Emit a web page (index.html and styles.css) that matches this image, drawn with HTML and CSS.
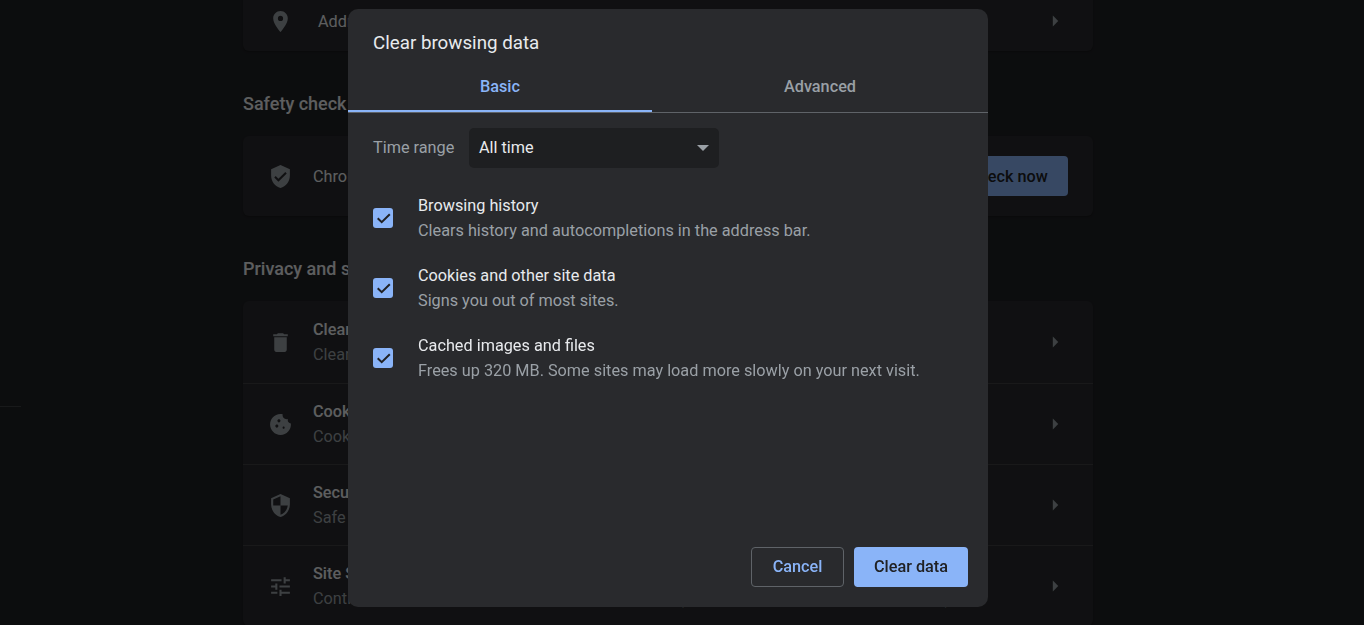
FILE: index.html
```html
<!DOCTYPE html>
<html lang="en">
<head>
  <meta charset="UTF-8" />
  <title>Settings - Privacy and security</title>
  <link rel="stylesheet" href="styles.css">
</head>
<body>
  <div class="page">
    <div class="sidebar"><div class="side-line"></div></div>
    <main class="main">
      <section class="card first-card">
        <div class="row short">
          <svg class="icon" viewBox="0 0 24 24"><path d="M12 2C8.13 2 5 5.13 5 9c0 5.25 7 13 7 13s7-7.75 7-13c0-3.87-3.13-7-7-7zm0 9.5a2.5 2.5 0 0 1 0-5 2.5 2.5 0 0 1 0 5z"/></svg>
          <div class="row-text"><div class="row-title plain addr">Addresses and more</div></div>
          <svg class="arrow" viewBox="0 0 24 24"><path d="M10 7l5 5-5 5z"/></svg>
        </div>
      </section>

      <h2 class="section-title">Safety check</h2>
      <section class="card">
        <div class="row">
          <svg class="icon" viewBox="0 0 24 24"><path d="M12 1L3 5v6c0 5.55 3.84 10.74 9 12 5.16-1.26 9-6.45 9-12V5l-9-4zm-2 16l-4-4 1.41-1.41L10 14.17l6.59-6.59L18 9l-8 8z"/></svg>
          <div class="row-text"><div class="row-title plain">Chrome can help keep you safe from data breaches, bad extensions, and more</div></div>
          <button class="check-btn">Check now</button>
        </div>
      </section>

      <h2 class="section-title">Privacy and security</h2>
      <section class="card privacy-card">
        <div class="row">
          <svg class="icon" viewBox="0 0 24 24"><path d="M6 19c0 1.1.9 2 2 2h8c1.1 0 2-.9 2-2V7H6v12zM19 4h-3.5l-1-1h-5l-1 1H5v2h14V4z"/></svg>
          <div class="row-text">
            <div class="row-title">Clear browsing data</div>
            <div class="row-sub">Clear history, cookies, cache, and more</div>
          </div>
          <svg class="arrow" viewBox="0 0 24 24"><path d="M10 7l5 5-5 5z"/></svg>
        </div>
        <div class="row">
          <svg class="icon" viewBox="0 0 24 24"><path d="M21.95 10.99c-1.79-.03-3.7-1.95-2.68-4.22-2.97 1-5.78-1.59-5.19-4.56C7.11.74 2 6.41 2 12c0 5.52 4.48 10 10 10 5.89 0 10.54-5.08 9.95-11.01zM8.5 15c-.83 0-1.5-.67-1.5-1.5S7.67 12 8.5 12s1.5.67 1.5 1.5S9.33 15 8.5 15zm2-5C9.67 10 9 9.33 9 8.5S9.67 7 10.5 7s1.5.67 1.5 1.5-.67 1.5-1.5 1.5zm4.5 6c-.55 0-1-.45-1-1s.45-1 1-1 1 .45 1 1-.45 1-1 1z"/></svg>
          <div class="row-text">
            <div class="row-title">Cookies and other site data</div>
            <div class="row-sub">Cookies are allowed</div>
          </div>
          <svg class="arrow" viewBox="0 0 24 24"><path d="M10 7l5 5-5 5z"/></svg>
        </div>
        <div class="row">
          <svg class="icon" viewBox="0 0 24 24"><path d="M12 1L3 5v6c0 5.55 3.84 10.74 9 12 5.16-1.26 9-6.45 9-12V5l-9-4zm0 10.99h7c-.53 4.12-3.28 7.79-7 8.94V12H5V6.3l7-3.11v8.8z"/></svg>
          <div class="row-text">
            <div class="row-title">Security</div>
            <div class="row-sub">Safe Browsing (protection from dangerous sites) and other security settings</div>
          </div>
          <svg class="arrow" viewBox="0 0 24 24"><path d="M10 7l5 5-5 5z"/></svg>
        </div>
        <div class="row">
          <svg class="icon" viewBox="0 0 24 24"><path d="M3 17v2h6v-2H3zM3 5v2h10V5H3zm10 16v-2h8v-2h-8v-2h-2v6h2zM7 9v2H3v2h4v2h2V9H7zm14 4v-2H11v2h10zm-6-4h2V7h4V5h-4V3h-2v6z"/></svg>
          <div class="row-text">
            <div class="row-title">Site Settings</div>
            <div class="row-sub">Controls what information sites can use and show (location, camera, pop-ups, and more)</div>
          </div>
          <svg class="arrow" viewBox="0 0 24 24"><path d="M10 7l5 5-5 5z"/></svg>
        </div>
      </section>
    </main>
  </div>

  <div class="backdrop"></div>

  <div class="dialog">
    <h1 class="dialog-title">Clear browsing data</h1>
    <div class="tabs">
      <div class="tab tab-basic active">Basic</div>
      <div class="tab tab-advanced">Advanced</div>
    </div>
    <div class="dialog-body">
      <div class="range">
        <span class="range-label">Time range</span>
        <div class="select">
          <span class="select-value">All time</span>
          <span class="select-caret"></span>
        </div>
      </div>
      <div class="option">
        <span class="checkbox"><svg viewBox="0 0 20 20"><path d="M4.7 10.3L8.7 14.2 16.8 6.2"/></svg></span>
        <div>
          <div class="option-title">Browsing history</div>
          <div class="option-sub">Clears history and autocompletions in the address bar.</div>
        </div>
      </div>
      <div class="option">
        <span class="checkbox"><svg viewBox="0 0 20 20"><path d="M4.7 10.3L8.7 14.2 16.8 6.2"/></svg></span>
        <div>
          <div class="option-title">Cookies and other site data</div>
          <div class="option-sub">Signs you out of most sites.</div>
        </div>
      </div>
      <div class="option">
        <span class="checkbox"><svg viewBox="0 0 20 20"><path d="M4.7 10.3L8.7 14.2 16.8 6.2"/></svg></span>
        <div>
          <div class="option-title">Cached images and files</div>
          <div class="option-sub">Frees up 320 MB. Some sites may load more slowly on your next visit.</div>
        </div>
      </div>
    </div>
    <div class="dialog-footer">
      <button class="btn btn-cancel">Cancel</button>
      <button class="btn btn-clear">Clear data</button>
    </div>
  </div>
</body>
</html>
```

FILE: styles.css
```css
* {
  margin: 0;
  padding: 0;
  box-sizing: border-box;
}

html, body {
  height: 625px;
  overflow: hidden;
}

body {
  font-family: Roboto, "Liberation Sans", sans-serif;
  font-size: 16.25px;
  background: #202124;
  color: #e8eaed;
}

.page {
  display: flex;
}

.sidebar {
  width: 243px;
  flex: none;
}

.side-line {
  width: 21px;
  height: 1px;
  margin-top: 406px;
  background: #3c4043;
}

.main {
  width: 850px;
  flex: none;
  margin-top: -9px;
}

.card {
  background: #292a2d;
  border-radius: 6px;
  box-shadow: 0 1px 2px rgba(0, 0, 0, 0.3);
}

.section-title {
  margin: 41px 0 20px;
  font-size: 18px;
  font-weight: 500;
  line-height: 24px;
  color: #e8eaed;
  white-space: nowrap;
}

.row {
  display: flex;
  align-items: center;
  height: 81px;
  padding: 0 25px;
  border-top: 1px solid #3f4043;
}

.card > .row:first-child {
  height: 80px;
  border-top: none;
}

.card > .row.short {
  height: 60px;
}

.privacy-card > .row:first-child {
  height: 82px;
}

.icon {
  width: 25px;
  height: 25px;
  flex: none;
  margin-right: 20px;
  fill: #9aa0a6;
}

.row-text {
  flex: 1;
  min-width: 0;
  white-space: nowrap;
}

.row-title {
  font-weight: 500;
  line-height: 22px;
}

.row-title.plain {
  font-weight: 400;
  padding-top: 2px;
}

.row-title.addr {
  padding-left: 5px;
}

.row-sub {
  line-height: 22px;
  margin-top: 3px;
  color: #9aa0a6;
}

.arrow {
  width: 26px;
  height: 26px;
  flex: none;
  fill: #9aa0a6;
}

.check-btn {
  width: 120px;
  height: 40px;
  flex: none;
  font: 500 16.25px Roboto, sans-serif;
  color: #202124;
  background: #8ab4f8;
  border: none;
  border-radius: 4px;
}

.backdrop {
  position: fixed;
  inset: 0;
  background: rgba(0, 0, 0, 0.6);
}

.dialog {
  position: fixed;
  left: 348px;
  top: 9px;
  width: 640px;
  height: 598px;
  display: flex;
  flex-direction: column;
  background: #292a2d;
  border-radius: 10px;
}

.dialog-title {
  padding: 22px 25px 0;
  font-size: 18.75px;
  font-weight: 400;
  line-height: 24px;
  color: #e8eaed;
}

.tabs {
  display: flex;
  margin-top: 17px;
  border-bottom: 1px solid #5f6368;
}

.tab {
  height: 40px;
  padding-top: 4px;
  font-weight: 500;
  line-height: 22px;
  text-align: center;
  color: #9aa0a6;
}

.tab-basic {
  width: 304px;
}

.tab-advanced {
  width: 336px;
}

.tab.active {
  color: #8ab4f8;
  border-bottom: 2px solid #8ab4f8;
}

.dialog-body {
  flex: 1;
  padding: 15px 25px 0;
}

.range {
  display: flex;
  align-items: center;
  margin-bottom: 15px;
}

.range-label {
  width: 96px;
  padding-bottom: 2px;
  color: #9aa0a6;
}

.select {
  width: 250px;
  height: 40px;
  display: flex;
  align-items: center;
  justify-content: space-between;
  padding: 0 10px;
  color: #e8eaed;
  background: #1e1f21;
  border-radius: 5px;
}

.select-value {
  padding-bottom: 2px;
}

.select-caret {
  width: 0;
  height: 0;
  border-left: 6px solid transparent;
  border-right: 6px solid transparent;
  border-top: 6px solid #9aa0a6;
}

.option {
  display: flex;
  align-items: center;
  height: 70px;
}

.checkbox {
  width: 20px;
  height: 20px;
  flex: none;
  margin-right: 25px;
  background: #8ab4f8;
  border-radius: 3px;
}

.checkbox svg {
  display: block;
  fill: none;
  stroke: #202124;
  stroke-width: 2;
}

.option-title {
  line-height: 22px;
  color: #e8eaed;
}

.option-sub {
  line-height: 22px;
  margin-top: 3px;
  color: #9aa0a6;
}

.dialog-footer {
  display: flex;
  justify-content: flex-end;
  gap: 10px;
  padding: 0 20px 20px;
}

.btn {
  height: 40px;
  padding-bottom: 2px;
  font: 500 16.25px Roboto, sans-serif;
  border-radius: 4px;
}

.btn-cancel {
  width: 93px;
  color: #8ab4f8;
  background: transparent;
  border: 1px solid #5f6368;
}

.btn-clear {
  width: 114px;
  color: #202124;
  background: #8ab4f8;
  border: none;
}
```
